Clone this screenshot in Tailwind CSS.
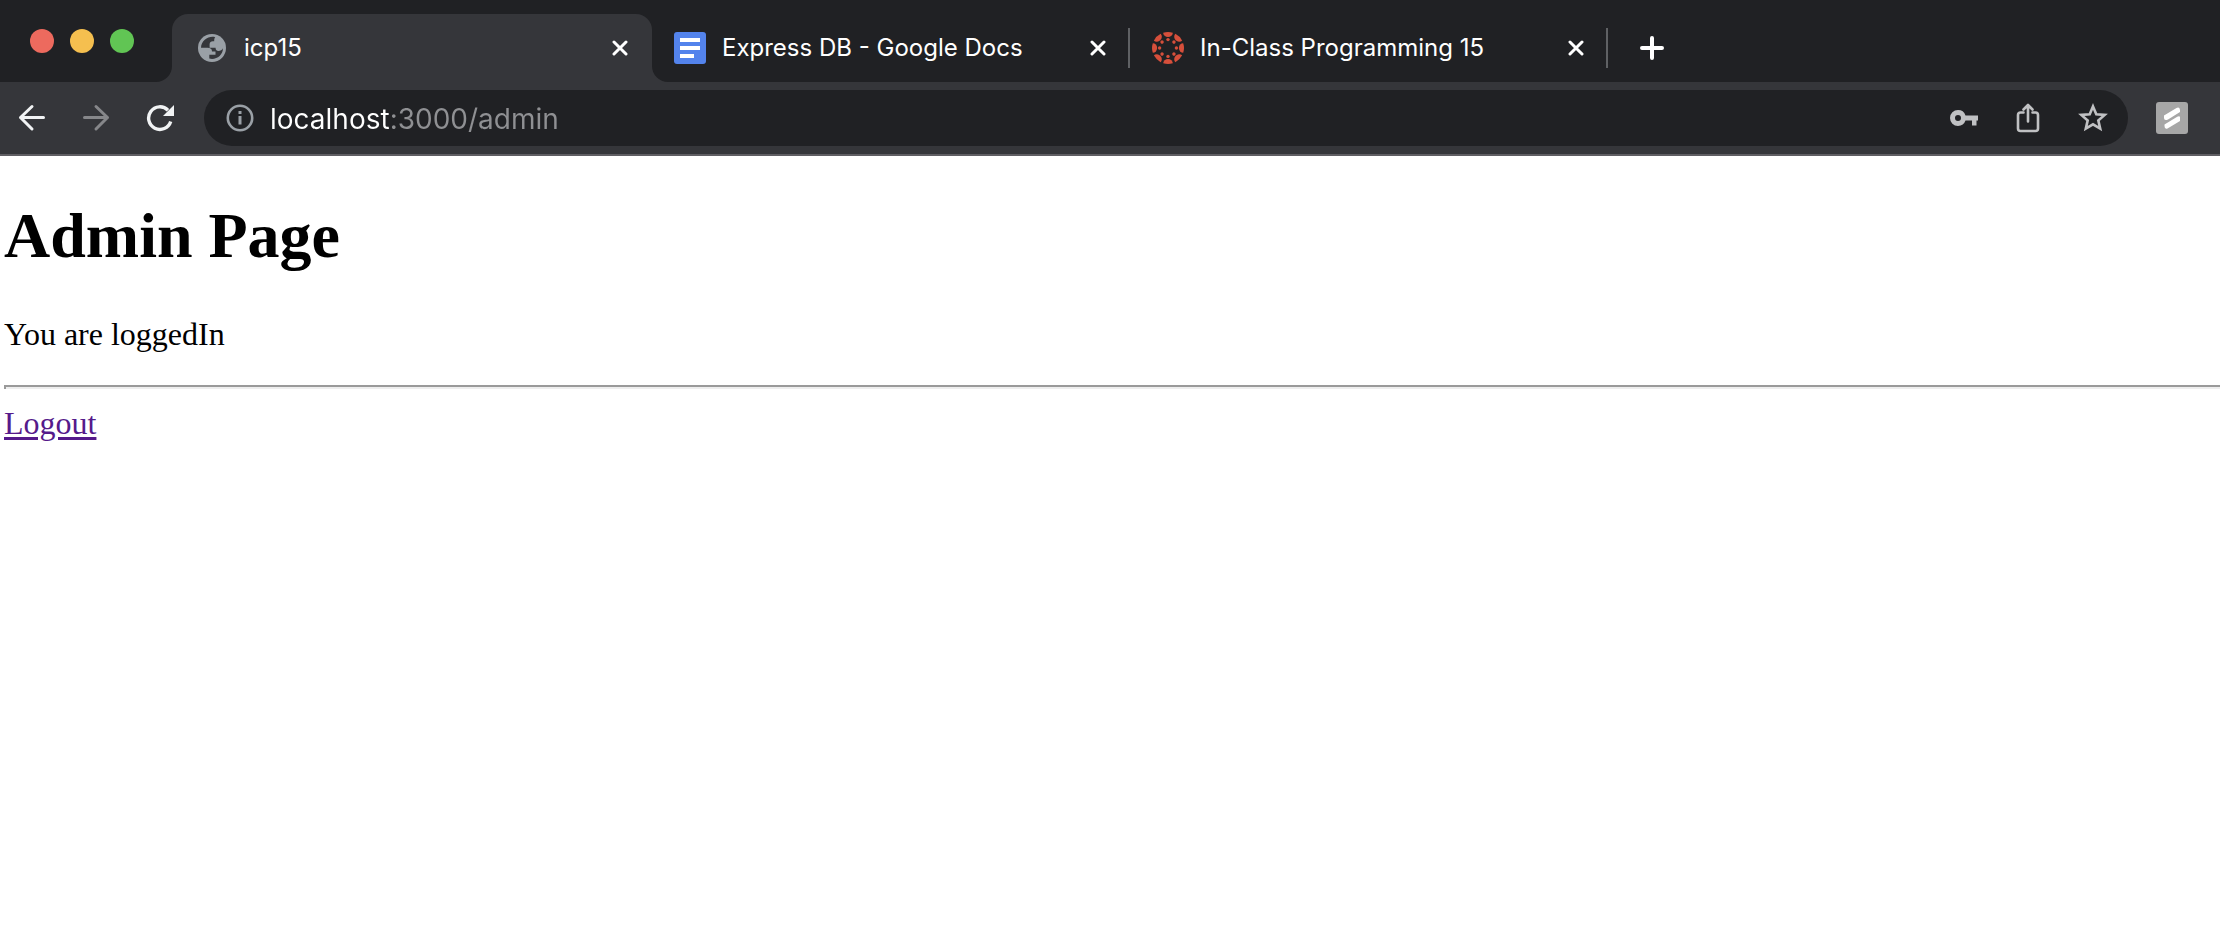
<!DOCTYPE html>
<html lang="en">
<head>
<meta charset="utf-8">
<title>icp15</title>
<script src="https://cdn.jsdelivr.net/npm/@tailwindcss/browser@4"></script>
</head>
<body class="min-h-screen bg-white">
<header class="font-['Inter',sans-serif] text-white">
  <div class="flex h-[82px] items-end bg-[#202124]">
    <div class="flex w-[172px] shrink-0 gap-4 self-start pt-[29px] pl-[30px]">
      <button aria-label="Close window" class="size-6 rounded-full bg-[#ed6a5e]"></button>
      <button aria-label="Minimize window" class="size-6 rounded-full bg-[#f5bf4f]"></button>
      <button aria-label="Zoom window" class="size-6 rounded-full bg-[#61c554]"></button>
    </div>
    <nav class="flex h-[68px]" aria-label="Tabs">
      <div class="relative flex w-[480px] items-center rounded-t-2xl bg-[#35363a] pr-6 pl-[26px]">
        <svg class="absolute bottom-0 -left-4 size-4" viewBox="0 0 16 16" aria-hidden="true"><path d="M16 0v16H0A16 16 0 0 0 16 0z" fill="#35363a"/></svg>
        <svg class="absolute -right-4 bottom-0 size-4" viewBox="0 0 16 16" aria-hidden="true"><path d="M0 0v16h16A16 16 0 0 1 0 0z" fill="#35363a"/></svg>
        <svg class="size-7 shrink-0" viewBox="0 0 28 28" aria-hidden="true"><circle cx="14" cy="14" r="14" fill="#9aa0a6"/><path d="M17.200 3.200C11 1.600 3.300 6 3 13.800H9.500C12.500 13.800 14 15.200 14 17.400H17.500V20.700H11.300V24.600C18 26.300 25 21.500 25 14.300C24 16.300 22 17.200 20 17C18.300 16.800 17.600 15.500 17.600 13.800H11.600V10.200C11.600 8.200 13 7.200 14.800 7.200H16.200C16.200 5.500 16.300 4.300 17.200 3.200z" fill="#35363a"/></svg>
        <a href="#" class="ml-[18px] flex-1 text-[24px] leading-8">icp15</a>
        <button aria-label="Close tab" class="size-4"><svg viewBox="0 0 16 16" fill="none" stroke="#fff" stroke-width="3" stroke-linecap="round"><path d="M2 2l12 12M14 2L2 14"/></svg></button>
      </div>
      <div class="flex w-[478px] items-center pl-[22px]">
        <svg class="size-8 shrink-0" viewBox="0 0 32 32" aria-hidden="true"><rect width="32" height="32" rx="3" fill="#5383ec"/><path d="M6 6h20v4H6zM6 14h20v4H6zM6 22h14v4H6z" fill="#fff"/></svg>
        <a href="#" class="ml-4 flex-1 text-[24px] leading-8 whitespace-nowrap">Express DB - Google Docs</a>
        <button aria-label="Close tab" class="mr-[22px] size-4"><svg viewBox="0 0 16 16" fill="none" stroke="#fff" stroke-width="3" stroke-linecap="round"><path d="M2 2l12 12M14 2L2 14"/></svg></button>
        <span class="h-10 w-0.5 bg-[#5f6164]"></span>
      </div>
      <div class="flex w-[478px] items-center pl-[22px]">
        <svg class="size-8 shrink-0" viewBox="0 0 32 32" fill="#d64f3b" aria-hidden="true">
          <defs><g id="petal"><path d="M11.200 .8Q16-.8 20.800 .8A4.800 4.300 0 0 1 11.200 .8z"/><circle cx="16" cy="7.600" r="1.700"/></g></defs>
          <use href="#petal"/><use href="#petal" transform="rotate(45 16 16)"/><use href="#petal" transform="rotate(90 16 16)"/><use href="#petal" transform="rotate(135 16 16)"/><use href="#petal" transform="rotate(180 16 16)"/><use href="#petal" transform="rotate(225 16 16)"/><use href="#petal" transform="rotate(270 16 16)"/><use href="#petal" transform="rotate(315 16 16)"/>
        </svg>
        <a href="#" class="ml-4 flex-1 text-[24px] leading-8 whitespace-nowrap">In-Class Programming 15</a>
        <button aria-label="Close tab" class="mr-[22px] size-4"><svg viewBox="0 0 16 16" fill="none" stroke="#fff" stroke-width="3" stroke-linecap="round"><path d="M2 2l12 12M14 2L2 14"/></svg></button>
        <span class="h-10 w-0.5 bg-[#5f6164]"></span>
      </div>
      <button aria-label="New tab" class="ml-8 w-6"><svg viewBox="0 0 24 24" fill="none" stroke="#fff" stroke-width="4" stroke-linecap="round"><path d="M12 2v20M2 12h20"/></svg></button>
    </nav>
  </div>
  <div class="flex h-[74px] items-center border-b-2 border-[#5f5e63] bg-[#35363a] pr-8 pl-[18px]">
    <button aria-label="Back" class="size-7"><svg viewBox="0 0 28 28" fill="none" stroke="#f1f3f4" stroke-width="3" stroke-linecap="round" stroke-linejoin="round"><path d="M25.500 13.500H2.500M14 2.500L2.500 13.500L14 25"/></svg></button>
    <button aria-label="Forward" class="ml-9 size-7"><svg viewBox="0 0 28 28" fill="none" stroke="#86878a" stroke-width="3" stroke-linecap="round" stroke-linejoin="round"><path d="M2.500 13.500H25.500M14 2.500L25.500 13.500L14 25"/></svg></button>
    <button aria-label="Reload" class="ml-9 size-7"><svg viewBox="0 0 28 28" fill="none" stroke="#f1f3f4" stroke-width="3.400"><path d="M24.700 17.500A11.300 11.300 0 1 1 22 6.200"/><path d="M28 1v11H17z" fill="#f1f3f4" stroke="none"/></svg></button>
    <div class="ml-[30px] flex h-14 min-w-0 flex-1 items-center rounded-full bg-[#202124] pr-5 pl-[22px]">
      <button aria-label="View site information" class="size-7 shrink-0"><svg viewBox="0 0 28 28" fill="none" stroke="#9aa0a6" stroke-width="2.600"><circle cx="14" cy="14" r="12.200"/><path d="M12.500 7h3v3h-3zM12.500 12h3v8.500h-3z" fill="#9aa0a6" stroke="none"/></svg></button>
      <input aria-label="Address" type="text" value="localhost:3000/admin" class="ml-4 h-10 min-w-0 flex-1 bg-[linear-gradient(to_right,#ffffff_120px,#8f9093_120px)] bg-clip-text pt-0.5 text-[28px] text-transparent outline-none">
      <button aria-label="Passwords" class="ml-4 h-4 w-7"><svg viewBox="0 0 28 16" fill="#c0c1c3" fill-rule="evenodd"><path d="M8 0A8 8 0 0 0 8 16A8 8 0 0 0 15.500 10.600H22V15.500H26.500V10.600H28V5.400H15.500A8 8 0 0 0 8 0zM8 5A3 3 0 0 1 8 11A3 3 0 0 1 8 5z"/></svg></button>
      <button aria-label="Share" class="ml-9 h-[30px] w-7"><svg viewBox="0 0 28 30" fill="none" stroke="#c0c1c3" stroke-width="2.600" stroke-linecap="round" stroke-linejoin="round"><path d="M9.500 9.500H6.500Q4 9.500 4 12V25.500Q4 28 6.500 28H21.500Q24 28 24 25.500V12Q24 9.500 21.500 9.500H18.500M14 18.500V2M9.500 6.500L14 2L18.500 6.500"/></svg></button>
      <button aria-label="Bookmark this page" class="ml-9 size-[30px]"><svg viewBox="0 0 30 30" fill="none" stroke="#c0c1c3" stroke-width="2.600"><path d="M15 3.400L18.300 11.200L26.700 11.900L20.300 17.400L22.200 25.600L15 21.300L7.800 25.600L9.700 17.400L3.300 11.900L11.700 11.200z"/></svg></button>
    </div>
    <button aria-label="Extension" class="ml-7 size-8"><svg viewBox="0 0 32 32"><rect width="32" height="32" rx="3" fill="#a7a7a7"/><path d="M8 13.500L20.500 6Q23.500 4.500 24 8V10L12 17.500Q8 19 8 16zM24 15V19L11.500 26.500Q8.500 27.500 8.500 24V22.500L20 15.500Q23.500 13.500 24 15z" fill="#fff"/></svg></button>
  </div>
</header>
<main class="pt-[43px] pl-1 font-['Liberation_Serif',serif] text-[32px] leading-[37px] text-black">
  <h1 class="mb-[43px] text-[64px] leading-[74px] font-bold">Admin Page</h1>
  <p>You are loggedIn</p>
  <hr class="mt-8 mb-4 h-1 border-0 border-t-2 border-l-2 border-[#9a9a9a] bg-[#eeeeee]">
  <a href="#" class="text-[#551a8b] underline decoration-[3px] underline-offset-3">Logout</a>
</main>
</body>
</html>
